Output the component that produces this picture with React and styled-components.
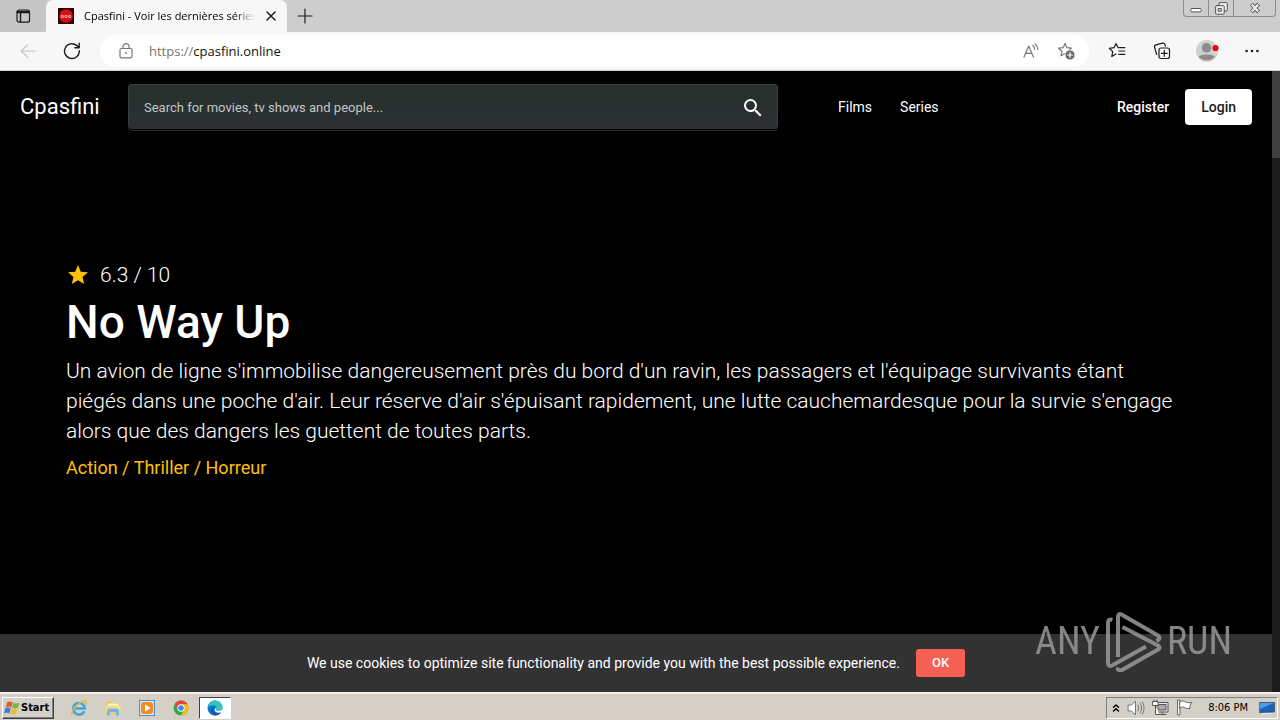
import React from "react";
import styled, { createGlobalStyle, css } from "styled-components";

const GlobalStyle = createGlobalStyle`
  *, *::before, *::after { box-sizing: border-box; }
  body { margin: 0; background: #000; font-family: Roboto, "Liberation Sans", sans-serif; }
  button, input { font: inherit; color: inherit; margin: 0; padding: 0; }
  button { border: 0; background: none; cursor: pointer; }
  a { color: inherit; text-decoration: none; }
  svg { display: block; flex: none; }
  h1, p { margin: 0; }
`;

const Screen = styled.div`
  display: flex;
  flex-direction: column;
  min-height: 100vh;
`;

/* Browser chrome */
const TabStrip = styled.div`
  display: flex;
  height: 32px;
  background: #cdcdcd;
  font-family: "Open Sans", "Noto Sans", sans-serif;
`;

const IconButton = styled.button`
  display: flex;
  align-items: center;
  justify-content: center;
  flex: none;
  width: ${(p) => p.$width || 32}px;
  height: 32px;
  color: ${(p) => p.$color || "#1b1b1b"};
`;

const TabMenu = styled(IconButton)`
  background: #c6c6c6;
  border-bottom-right-radius: 6px;
`;

const Tab = styled.div`
  display: flex;
  align-items: center;
  width: 241px;
  padding-left: 12px;
  background: #f7f7f7;
  border-radius: 7px 7px 0 0;
`;

const TabTitle = styled.span`
  flex: 1;
  min-width: 0;
  margin-left: 10px;
  overflow: hidden;
  white-space: nowrap;
  font-size: 11px;
  line-height: 16px;
  color: #000;
  mask-image: linear-gradient(to right, #000 88%, transparent);
`;

const WindowControls = styled.div`
  display: flex;
  height: 17px;
  margin: 0 4px 0 auto;
  border: 1px solid #8c8c8c;
  border-top: 0;
  border-radius: 0 0 4px 4px;
`;

const WindowButton = styled.button`
  display: flex;
  align-items: center;
  justify-content: center;
  width: ${(p) => p.$width}px;
  & + & { border-left: 1px solid #8c8c8c; }
`;

const Toolbar = styled.div`
  display: flex;
  align-items: center;
  height: 39px;
  padding: 0 12px;
  background: #f7f7f7;
  border-bottom: 1px solid #d2d2d2;
`;

const AddressBar = styled.div`
  display: flex;
  align-items: center;
  flex: 1;
  height: 32px;
  margin-right: 12px;
  padding: 0 6px 0 10px;
  background: #fff;
  border-radius: 16px;
  font-family: "Open Sans", "Noto Sans", sans-serif;
  font-size: 13px;
  line-height: 20px;
  color: #111;
`;

const Address = styled.a`
  flex: 1;
  margin-left: 7px;
`;

const Scheme = styled.span`
  color: #767676;
`;

const ToolbarActions = styled.div`
  display: flex;
  gap: 13px;
`;

const PageView = styled.div`
  position: relative;
  display: flex;
  flex: 1;
`;

const Scrollbar = styled.div`
  width: 8px;
  background: #1c1c1c;
`;

const ScrollThumb = styled.div`
  height: 87px;
  background: #404040;
`;

/* Site */
const Site = styled.div`
  display: flex;
  flex-direction: column;
  flex: 1;
  min-width: 0;
  background: #000;
  color: #fff;
`;

const Header = styled.header`
  display: flex;
  align-items: center;
  padding: 13px 20px;
`;

const Brand = styled.a`
  width: 108px;
  font-size: 22px;
  line-height: 28px;
`;

const Search = styled.form`
  display: flex;
  align-items: center;
  flex: 0 1 650px;
  height: 45px;
  padding: 2px 12px 0 15px;
  background: linear-gradient(#27302d, #2c3033);
  border: 1px solid #3a4040;
  border-bottom-color: #2c3033;
  border-radius: 4px;
  box-shadow: 0 1px 0 #000, 0 2px 0 #2b2b2b;
`;

const SearchInput = styled.input`
  flex: 1;
  min-width: 0;
  border: 0;
  outline: 0;
  background: none;
  font-size: 13px;
  line-height: 20px;
  &::placeholder { color: #c3c5c5; opacity: 1; }
`;

const Nav = styled.nav`
  display: flex;
  gap: 28px;
  margin-left: 60px;
  font-size: 14px;
  line-height: 20px;
`;

const Account = styled.div`
  display: flex;
  align-items: center;
  gap: 16px;
  margin-left: auto;
  font-size: 14px;
  line-height: 20px;
  font-weight: 500;
`;

const LoginButton = styled.button`
  height: 36px;
  padding: 0 16px;
  background: #fff;
  border-radius: 4px;
  color: #1c1c1c;
`;

const Hero = styled.main`
  flex: 1;
  padding: 118px 66px 24px;
`;

const Rating = styled.div`
  display: flex;
  align-items: center;
  gap: 10px;
  font-size: 21px;
  font-weight: 300;
  line-height: 30px;
`;

const Title = styled.h1`
  margin: 2px 0 4px;
  font-size: 46px;
  font-weight: 500;
  line-height: 60px;
`;

const Overview = styled.p`
  max-width: 1112px;
  font-size: 21px;
  font-weight: 300;
  line-height: 30px;
`;

const Genres = styled.p`
  margin-top: 10px;
  font-size: 18px;
  line-height: 24px;
  color: #ffc107;
`;

const CookieBar = styled.div`
  display: flex;
  align-items: center;
  justify-content: center;
  gap: 16px;
  height: 58px;
  background: #323232;
  font-size: 14px;
  line-height: 20px;
`;

const OkButton = styled.button`
  height: 28px;
  padding: 0 16px;
  background: #f65f54;
  border-radius: 3px;
  font-size: 13px;
  font-weight: 500;
`;

const Watermark = styled.div`
  position: absolute;
  right: 48px;
  bottom: 20px;
  display: flex;
  align-items: center;
  gap: 4px;
  color: #999;
  opacity: 0.85;
  font-family: "Liberation Sans Narrow", "Roboto Condensed", Roboto, sans-serif;
  font-size: 38px;
  line-height: 62px;
  pointer-events: none;
`;

/* Taskbar */
const Taskbar = styled.footer`
  display: flex;
  align-items: center;
  height: 28px;
  padding: 1px 2px 0;
  background: #d4d0c8;
  border-top: 2px solid #f4f2ee;
  font-family: "DejaVu Sans Condensed", "DejaVu Sans", sans-serif;
  font-size: 11px;
  line-height: 16px;
  color: #000;
`;

const raised = css`
  border: 1px solid;
  border-color: #fff #404040 #404040 #fff;
  box-shadow: inset -1px -1px 0 #808080;
`;

const StartButton = styled.button`
  ${raised}
  display: flex;
  align-items: center;
  gap: 1px;
  width: 52px;
  height: 22px;
  margin-right: 9px;
  padding-left: 1px;
  font-weight: 700;
`;

const TaskButton = styled.button`
  display: flex;
  align-items: center;
  justify-content: center;
  width: 32px;
  height: 22px;
  margin-right: 2px;
  ${(p) =>
    p.$active &&
    css`
      background: #fff;
      border: 1px solid;
      border-color: #404040 #fff #fff #404040;
    `}
`;

const Tray = styled.div`
  display: flex;
  align-items: center;
  gap: 7px;
  height: 22px;
  margin-left: auto;
  padding: 0 2px 0 5px;
  border: 1px solid;
  border-color: #808080 #fff #fff #808080;
`;

const Clock = styled.time`
  margin: 0 4px 0 8px;
`;

function Icon({ size = 16, box = 16, children, ...rest }) {
  return (
    <svg
      width={size}
      height={size}
      viewBox={`0 0 ${box} ${box}`}
      fill="none"
      stroke="currentColor"
      strokeWidth="1.2"
      strokeLinecap="round"
      strokeLinejoin="round"
      aria-hidden="true"
      {...rest}
    >
      {children}
    </svg>
  );
}

const Favicon = () => (
  <Icon stroke="none">
    <rect width="16" height="16" fill="#2c0707" />
    <circle cx="8" cy="8" r="6.8" fill="#d60f13" />
    <circle cx="4.4" cy="8.6" r="1.5" fill="#f9c9c6" />
    <circle cx="8" cy="8.6" r="1.5" fill="#f9c9c6" />
    <circle cx="11.6" cy="8.6" r="1.5" fill="#f9c9c6" />
    <path d="M4 8.600h.8M7.600 8.600h.8M11.200 8.600h.8" stroke="#a00" strokeWidth=".8" />
  </Icon>
);

const BrowserTabs = () => (
  <TabStrip>
    <TabMenu $width={46} aria-label="Tab actions menu">
      <Icon>
        <rect x="2" y="2" width="12.5" height="12.2" rx="2" />
        <path d="M2.400 3.400h11.600M2.400 4.600h11.600M5.500 5v9" strokeWidth="1.4" />
      </Icon>
    </TabMenu>
    <Tab>
      <Favicon />
      <TabTitle>Cpasfini - Voir les dernières séries</TabTitle>
      <IconButton aria-label="Close tab">
        <Icon strokeWidth="1.5"><path d="M4 4l8 8M12 4l-8 8" /></Icon>
      </IconButton>
    </Tab>
    <IconButton $width={36} aria-label="New tab">
      <Icon><path d="M8 1v14M1 8h14" /></Icon>
    </IconButton>
    <WindowControls>
      <WindowButton $width={24} aria-label="Minimize">
        <Icon size={12} box={12} stroke="#555"><rect x=".8" y="6.5" width="10.4" height="3.4" rx="1" fill="#fff" strokeWidth="1" /></Icon>
      </WindowButton>
      <WindowButton $width={25} aria-label="Restore">
        <Icon size={13} box={13} stroke="#555" strokeWidth="1">
          <rect x="4" y=".6" width="8.3" height="8.3" rx="1" fill="#eee" />
          <rect x=".6" y="3.6" width="8.6" height="8.6" rx="1" fill="#eee" />
          <rect x="3.5" y="6.5" width="2.8" height="2.8" fill="#ccc" />
        </Icon>
      </WindowButton>
      <WindowButton $width={42} aria-label="Close">
        <Icon size={12} box={12}>
          <path d="M2.5 2l7 8M9.500 2l-7 8" stroke="#555" strokeWidth="4" strokeLinecap="butt" />
          <path d="M2.800 2.500l6.400 7M9.200 2.500l-6.400 7" stroke="#eee" strokeWidth="2.200" strokeLinecap="butt" />
        </Icon>
      </WindowButton>
    </WindowControls>
  </TabStrip>
);

const star = "M8 1.6l1.9 4.1 4.5.5-3.3 3.1.9 4.5L8 11.5l-4 2.3.9-4.5L1.6 6.2l4.5-.5z";

const BrowserToolbar = () => (
  <Toolbar>
    <IconButton $color="#c6c6c6" aria-label="Back">
      <Icon><path d="M15 8H1M7.5 2L1 8l6.5 6" /></Icon>
    </IconButton>
    <IconButton $width={56} aria-label="Refresh">
      <Icon size={18} box={18} strokeWidth="1.4">
        <path d="M16.3 8.8A7.4 7.4 0 1 1 13.6 3.4L16 5.4M16.2 1.2v4.5h-4.4" />
      </Icon>
    </IconButton>
    <AddressBar>
      <IconButton as="span" $color="#777">
        <Icon>
          <rect x="2" y="5.500" width="12" height="9.300" rx="1.500" />
          <path d="M5 5.500V3.600a3 3 0 0 1 6 0v1.900" />
          <circle cx="8" cy="10" r=".9" fill="currentColor" stroke="none" />
        </Icon>
      </IconButton>
      <Address href="https://cpasfini.online"><Scheme>https://</Scheme>cpasfini.online</Address>
      <IconButton $width={36} $color="#777" aria-label="Read aloud">
        <Icon>
          <path d="M1 14L5.700 3l4.700 11M2.600 10.300h6.200M9.800 2.500c1.200.9 1.800 2.200 1.800 3.800M12 1c1.800 1.300 2.700 3.200 2.800 5.400" />
        </Icon>
      </IconButton>
      <IconButton $width={34} $color="#777" aria-label="Add to favorites">
        <Icon size={18} box={18}>
          <path d={star} />
          <circle cx="13" cy="13" r="5" fill="#666" stroke="#fff" strokeWidth=".8" />
          <path d="M13 10.600v4.800M10.600 13h4.800" stroke="#fff" />
        </Icon>
      </IconButton>
    </AddressBar>
    <ToolbarActions>
      <IconButton aria-label="Favorites">
        <Icon size={18} box={18}>
          <path d="M11 5.700h-.8L8 1.600 6.100 5.700l-4.800.6 3.400 3.300-.9 5L8 12.100M11.800 5.700h5M10.800 9h6M10.800 12.400h6" />
        </Icon>
      </IconButton>
      <IconButton aria-label="Collections">
        <Icon size={18} box={18}>
          <path d="M3.700 12.500L1.600 5.400a2 2 0 0 1 1.300-2.500l6.700-1.700a2 2 0 0 1 2.400 1.400l.4 1.500" />
          <rect x="6" y="6" width="10.500" height="10.500" rx="2" />
          <path d="M11.300 8.300v6M8.300 11.300h6" />
        </Icon>
      </IconButton>
      <IconButton aria-label="Profile">
        <Icon size={24} box={24} stroke="none">
          <circle cx="12" cy="12" r="11" fill="#d2d0ce" />
          <circle cx="11.500" cy="8.800" r="4.800" fill="#8e8b89" />
          <path d="M3.800 18c1.200-3.200 14.600-3.200 15.800 0a11 11 0 0 1-15.800 0z" fill="#8e8b89" />
          <circle cx="20.500" cy="9" r="3.100" fill="#d90b1c" />
        </Icon>
      </IconButton>
      <IconButton aria-label="Settings and more">
        <Icon stroke="none">
          <g fill="currentColor"><circle cx="2.600" cy="8" r="1.300" /><circle cx="8" cy="8" r="1.300" /><circle cx="13.400" cy="8" r="1.300" /></g>
        </Icon>
      </IconButton>
    </ToolbarActions>
  </Toolbar>
);

const SiteHeader = () => (
  <Header>
    <Brand href="#home">Cpasfini</Brand>
    <Search role="search">
      <SearchInput type="search" aria-label="Search" placeholder="Search for movies, tv shows and people..." />
      <button type="button" aria-label="Submit search">
        <Icon size={24} box={24} stroke="none">
          <path fill="#fff" d="M15.5 14h-.79l-.28-.27A6.47 6.47 0 0 0 16 9.5 6.5 6.5 0 1 0 9.5 16c1.61 0 3.09-.59 4.23-1.57l.27.28v.79l5 4.99L20.49 19l-4.99-5zm-6 0C7.01 14 5 11.99 5 9.5S7.01 5 9.5 5 14 7.01 14 9.5 11.99 14 9.5 14z" />
        </Icon>
      </button>
    </Search>
    <Nav aria-label="Main">
      <a href="#films">Films</a>
      <a href="#series">Series</a>
    </Nav>
    <Account>
      <a href="#register">Register</a>
      <LoginButton>Login</LoginButton>
    </Account>
  </Header>
);

const WindowsTaskbar = () => (
  <Taskbar>
    <StartButton>
      <Icon stroke="none">
        <path d="M3.200 2.400C5.300 1 7 1.200 8.600 2.200L7.200 7.400C5.600 6.500 3.900 6.300 1.700 7.500z" fill="#e8572a" />
        <path d="M9.300 2.700c1.800.9 3.500 1 6 0l-1.500 5c-2.200 1-4 .9-5.800 0z" fill="#7cb342" />
        <path d="M1.400 8.300c2-1.200 3.700-.9 5.400.1l-1.400 5.100c-1.700-.9-3.400-1-5.400.1z" fill="#3d7edb" />
        <path d="M7.700 8.800c1.900.9 3.700.9 5.900 0l-1.500 5c-2.200 1-4.100.8-5.800-.1z" fill="#f7bd27" />
      </Icon>
      Start
    </StartButton>
    <TaskButton aria-label="Internet Explorer">
      <Icon size={18} box={18}>
        <path d="M14.300 12.200A5.800 5.800 0 1 1 14.800 9.500H5" stroke="#42a5df" strokeWidth="2.600" strokeLinecap="butt" />
        <path d="M3 15.800C-1.500 16 5.500 4.500 14 2c3-.7 2.700 1.800 1.400 3.800" stroke="#e6bc42" strokeWidth="1.500" />
      </Icon>
    </TaskButton>
    <TaskButton aria-label="File Explorer">
      <Icon size={18} box={18} stroke="none">
        <path d="M2 2.500h5l1 1.500h7.500v11H2z" fill="#e5c663" />
        <path d="M3.500 4.500h11v4h-11z" fill="#fff6c5" />
        <path d="M1.500 6.500h15v7h-15z" fill="#f4dc88" />
        <path d="M3 16.500v-4Q3 9.500 6 9.500h6q3 0 3 3v4h-3v-3.500H6v3.500z" fill="#70b7e6" />
      </Icon>
    </TaskButton>
    <TaskButton aria-label="Media Player">
      <Icon stroke="none">
        <rect x=".5" y=".5" width="15" height="15" fill="#d7ebf8" stroke="#4f91c9" />
        <rect x="2" y="2" width="12" height="12" rx="3" fill="#f58a1f" />
        <path d="M6 4.200v7.600L11.500 8z" fill="#fff" />
      </Icon>
    </TaskButton>
    <TaskButton aria-label="Chrome">
      <Icon stroke="none">
        <circle cx="8" cy="8" r="7.500" fill="#34a853" />
        <path d="M1.500 4.200A7.500 7.500 0 0 1 14.500 4.200H8L4.700 9.800z" fill="#ea4335" />
        <path d="M14.500 4.200A7.500 7.500 0 0 1 7.600 15.500L11.300 9.800 8 4.200z" fill="#fbbc05" />
        <circle cx="8" cy="8" r="3.700" fill="#fff" />
        <circle cx="8" cy="8" r="2.800" fill="#4285f4" />
      </Icon>
    </TaskButton>
    <TaskButton $active aria-label="Edge">
      <Icon stroke="none">
        <circle cx="8" cy="8" r="7.500" fill="#0c78cc" />
        <path d="M.6 7.500C1.400 2.800 4.400.5 8 .5c4.500 0 7.500 3 7.500 6.500 0 2.500-1.800 3.900-4 3.900-2 0-2.900-.8-2.400-1.500.9-1.400.3-4.200-3-4.200C3.500 5.200 1.500 6 .6 7.500z" fill="#35c5c2" />
        <path d="M7 7.200C5 9 6.500 13 10.500 13c1.600 0 2.800-.4 3.800-1-1.300 2.300-3.800 3.500-6.300 3.500-3-.5-4.800-3-4-5.500C4.400 8.500 5.400 7.500 7 7.200z" fill="#155aa8" />
        <path d="M9.100 9.400c-.5.700.4 1.500 2.400 1.500 1.800 0 3.200-.7 3.800-2 .4 1.600.1 2.500-.5 3.100-2.900 1.300-6.300.6-7-1.600-.2-.7 0-1.500.4-2.100.6-.3 1.200.3.900 1.100z" fill="#fff" />
      </Icon>
    </TaskButton>
    <Tray>
      <Icon size={8} box={8} stroke="#000" strokeWidth="1.400"><path d="M1.500 3.300L4 .9l2.500 2.400M1.500 7.100L4 4.700l2.500 2.400" /></Icon>
      <Icon size={18} box={18} stroke="#777" strokeWidth="1">
        <path d="M1.500 6h3l4-4v14l-4-4h-3z" fill="#fff" /><path d="M11 6q2 3 0 6M13.200 4.200q3 4.800 0 9.600M15.400 2.800q3.500 6.200 0 12.400" />
      </Icon>
      <Icon size={17} box={17} stroke="#555" strokeWidth="1">
        <rect x="4.500" y="3.500" width="11.500" height="9.500" fill="#eee" /><rect x="6.500" y="5.500" width="7.500" height="5.500" fill="#aaa" />
        <path d="M7 15.500h7M10.300 13v2" /><path d="M1 2.500h5v4H1zM2 1v1.500M5 1v1.500M3.500 6.500v9H7" fill="#fff" />
      </Icon>
      <Icon size={17} box={17} stroke="#666" strokeWidth="1">
        <path d="M2 1h2v15H2z" fill="#fff" /><path d="M4 2.500c3-1.500 4 0 5.500.5s3 1 6.500.5c-2 2-2.500 4-2 6-3 .5-4-.5-5.500-1S6 7.500 4 9z" fill="#fff" />
      </Icon>
      <Clock>8:06 PM</Clock>
      <Icon stroke="none">
        <path d="M.5 2.500h15v9.500l-15 .5z" fill="#1763bd" stroke="#333" strokeWidth=".6" /><path d="M1 3h14L1 9z" fill="#559be3" /><path d="M4 13h8l1 1.500H3z" fill="#d9e2e8" />
      </Icon>
    </Tray>
  </Taskbar>
);

export default function App() {
  return (
    <>
      <GlobalStyle />
      <Screen>
        <BrowserTabs />
        <BrowserToolbar />
        <PageView>
          <Site>
            <SiteHeader />
            <Hero>
              <Rating>
                <Icon size={24} box={24} stroke="none">
                  <path fill="#ffc107" d="M12 17.270L18.180 21l-1.640-7.030L22 9.240l-7.190-.61L12 2 9.190 8.630 2 9.240l5.460 4.730L5.820 21z" />
                </Icon>
                6.3 / 10
              </Rating>
              <Title>No Way Up</Title>
              <Overview>
                Un avion de ligne s'immobilise dangereusement près du bord d'un ravin, les passagers et l'équipage
                survivants étant piégés dans une poche d'air. Leur réserve d'air s'épuisant rapidement, une lutte
                cauchemardesque pour la survie s'engage alors que des dangers les guettent de toutes parts.
              </Overview>
              <Genres>Action / Thriller / Horreur</Genres>
            </Hero>
            <CookieBar>
              <span>We use cookies to optimize site functionality and provide you with the best possible experience.</span>
              <OkButton>OK</OkButton>
            </CookieBar>
          </Site>
          <Scrollbar><ScrollThumb /></Scrollbar>
          <Watermark>
            <span>ANY</span>
            <Icon width={59} height={62} viewBox="0 0 59 62" strokeWidth="4">
              <path d="M8.500 9.800Q4 8.500 4 13v40q0 4 4 2.500L42 36.500" strokeLinecap="butt" />
              <path d="M14 47V7q0-4 3.500-2.500L54 25.500q3.500 3-1.500 5.500" strokeLinecap="butt" />
              <path d="M18.500 17L54 35.500q3 2 0 4L18 60q-5 1-4-2.500" strokeLinecap="butt" />
            </Icon>
            <span>RUN</span>
          </Watermark>
        </PageView>
        <WindowsTaskbar />
      </Screen>
    </>
  );
}
